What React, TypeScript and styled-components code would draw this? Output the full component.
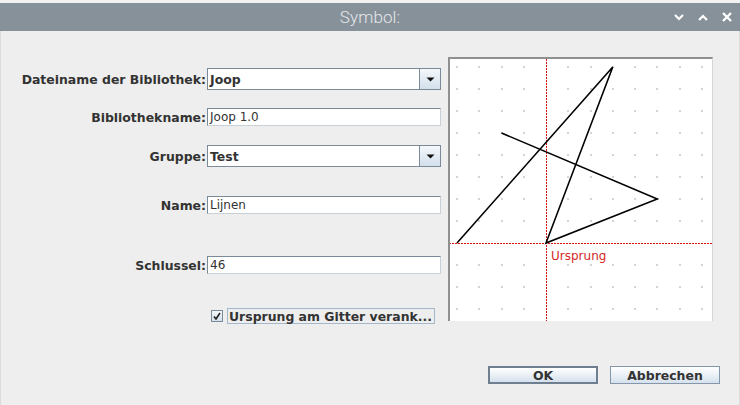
import React from "react";
import styled, { createGlobalStyle } from "styled-components";

const Global = createGlobalStyle`
  html, body { margin: 0; padding: 0; background: #eeeeee; overflow: hidden; }
  #root { width: 740px; height: 405px; }
`;

const Window = styled.div`
  width: 740px;
  height: 405px;
  display: flex;
  flex-direction: column;
  background: #eeeeee;
  box-sizing: border-box;
  font-family: "DejaVu Sans", Verdana, sans-serif;
`;

const TopStrip = styled.div`
  height: 3px;
  background: #f2f2f2;
`;

const TitleBar = styled.div`
  height: 28px;
  background: #87919a;
  display: grid;
  grid-template-columns: 1fr auto 1fr;
  align-items: center;
`;

const Title = styled.div`
  grid-column: 2;
  font-family: Roboto, "Liberation Sans", sans-serif;
  font-weight: 300;
  font-size: 17px;
  color: #e4e7ea;
  letter-spacing: 0.1px;
`;

const WinButtons = styled.div`
  grid-column: 3;
  justify-self: end;
  display: flex;
  align-items: center;
  gap: 14px;
  padding-right: 8px;
`;

const Body = styled.div`
  flex: 1;
  display: flex;
  flex-direction: column;
  border-left: 1px solid #dcdcdc;
  border-right: 1px solid #dcdcdc;
`;

const MainRow = styled.div`
  display: flex;
  align-items: flex-start;
  padding-top: 26px;
`;

const Form = styled.div`
  margin-top: 3px;
  display: grid;
  grid-template-columns: 205px 234px;
  column-gap: 1px;
  grid-template-rows: 38px 38px 40px 58px 62px 40px;
  align-items: center;
`;

const Label = styled.div`
  justify-self: end;
  font-weight: bold;
  font-size: 12.45px;
  color: #333333;
  white-space: nowrap;
`;

const Combo = styled.div`
  height: 22px;
  box-sizing: border-box;
  border: 1px solid #7a8a99;
  background: #ffffff;
  display: flex;
  align-items: stretch;
`;

const ComboText = styled.div`
  flex: 1;
  display: flex;
  align-items: center;
  padding-left: 2px;
  font-weight: bold;
  font-size: 12.45px;
  color: #333333;
`;

const ArrowButton = styled.div`
  width: 20px;
  border-left: 1px solid #7a8a99;
  background: linear-gradient(#f4f8fb, #d3dfeb);
  display: flex;
  align-items: center;
  justify-content: center;
`;

const Field = styled.div`
  height: 18px;
  box-sizing: border-box;
  border: 1px solid #7a8a99;
  border-right-color: #c8d0d8;
  border-bottom-color: #c8d0d8;
  background: #ffffff;
  display: flex;
  align-items: center;
  padding-left: 2px;
  font-size: 12px;
  color: #333333;
`;

const CheckRow = styled.div`
  grid-column: 2;
  display: flex;
  align-items: center;
  gap: 4px;
  padding-left: 4px;
`;

const CheckBox = styled.div`
  width: 12px;
  height: 12px;
  box-sizing: border-box;
  border: 1px solid #7a8a99;
  background: linear-gradient(#f4f8fb, #d3dfeb);
  display: flex;
  align-items: center;
  justify-content: center;
`;

const CheckLabel = styled.div`
  height: 16px;
  box-sizing: border-box;
  border: 1px solid #a3b8cc;
  padding: 0 2px 0 1px;
  display: flex;
  align-items: center;
  font-weight: bold;
  font-size: 12.45px;
  color: #333333;
  white-space: nowrap;
`;

const Canvas = styled.div`
  margin-left: 7px;
  width: 265px;
  height: 264px;
  box-sizing: border-box;
  background: #ffffff;
  border-top: 2px solid #8f8f8f;
  border-left: 2px solid #8f8f8f;
  border-right: 1px solid #d6d6d6;
  display: flex;
`;

const ButtonRow = styled.div`
  display: flex;
  justify-content: flex-end;
  gap: 12px;
  margin-top: 30px;
  padding-right: 19px;
`;

const Button = styled.div<{ $default?: boolean }>`
  width: 110px;
  height: 18px;
  box-sizing: border-box;
  border: ${(p) => (p.$default ? "2px solid #6f7f8f" : "1px solid #8497aa")};
  background: linear-gradient(#ffffff, #d5e1ed);
  display: flex;
  align-items: center;
  justify-content: center;
  font-weight: bold;
  font-size: 12.45px;
  color: #333333;
`;

const Chevron = ({ up }: { up?: boolean }) => (
  <svg width="10" height="7" viewBox="0 0 10 7">
    <path
      d={up ? "M1 6 L5 2 L9 6" : "M1 1 L5 5 L9 1"}
      stroke="#ffffff"
      strokeWidth="2.2"
      fill="none"
    />
  </svg>
);

const CloseIcon = () => (
  <svg width="10" height="10" viewBox="0 0 10 10">
    <path d="M1 1 L9 9 M9 1 L1 9" stroke="#ffffff" strokeWidth="2.4" fill="none" />
  </svg>
);

const DownTriangle = () => (
  <svg width="9" height="5" viewBox="0 0 9 5">
    <path d="M0.5 0.5 L8.5 0.5 L4.5 4.5 Z" fill="#111111" />
  </svg>
);

const CheckMark = () => (
  <svg width="8" height="8" viewBox="0 0 8 8">
    <path d="M1 4.5 L3 7 L7 1" stroke="#222" strokeWidth="1.6" fill="none" />
  </svg>
);

const OX = 546;
const OY = 243;
const SX = 22.25;
const SY = 22;

const pt = (x: number, y: number) => `${OX + x * SX},${OY + y * SY}`;

const Drawing = () => {
  const dots: React.ReactNode[] = [];
  for (let i = -4; i <= 7; i++) {
    for (let j = -8; j <= 3; j++) {
      if (i === 0 || j === 0) continue;
      const x = Math.round(OX + i * SX);
      const y = Math.round(OY + j * SY);
      dots.push(<rect key={`${i}_${j}`} x={x - 0.5} y={y - 0.5} width="1" height="1" fill="#555" />);
    }
  }
  const poly = [pt(-4, 0), pt(3, -8), pt(0, 0), pt(5, -2), pt(-2, -5)].join(" ");
  return (
    <svg width="262" height="262" viewBox="450 59 262 262">
      {dots}
      <line x1={OX + 0.5} y1="59" x2={OX + 0.5} y2="321" stroke="#d41414" strokeWidth="1" strokeDasharray="2 1" />
      <line x1="449" y1={OY + 0.5} x2="712" y2={OY + 0.5} stroke="#d41414" strokeWidth="1" strokeDasharray="2 1" />
      <polyline points={poly} fill="none" stroke="#000" strokeWidth="1.6" strokeLinejoin="miter" />
      <text x="551" y="260" fontFamily="DejaVu Sans, sans-serif" fontSize="12" fill="#d42828">
        Ursprung
      </text>
    </svg>
  );
};

export default function App() {
  return (
    <>
      <Global />
      <Window>
        <TopStrip />
        <TitleBar>
          <Title>Symbol:</Title>
          <WinButtons>
            <Chevron />
            <Chevron up />
            <CloseIcon />
          </WinButtons>
        </TitleBar>
        <Body>
          <MainRow>
            <Form>
              <Label>Dateiname der Bibliothek:</Label>
              <Combo>
                <ComboText>Joop</ComboText>
                <ArrowButton>
                  <DownTriangle />
                </ArrowButton>
              </Combo>
              <Label>Bibliothekname:</Label>
              <Field>Joop 1.0</Field>
              <Label>Gruppe:</Label>
              <Combo>
                <ComboText>Test</ComboText>
                <ArrowButton>
                  <DownTriangle />
                </ArrowButton>
              </Combo>
              <Label>Name:</Label>
              <Field>Lijnen</Field>
              <Label>Schlussel:</Label>
              <Field>46</Field>
              <CheckRow>
                <CheckBox>
                  <CheckMark />
                </CheckBox>
                <CheckLabel>Ursprung am Gitter verank...</CheckLabel>
              </CheckRow>
            </Form>
            <Canvas>
              <Drawing />
            </Canvas>
          </MainRow>
          <ButtonRow>
            <Button $default>OK</Button>
            <Button>Abbrechen</Button>
          </ButtonRow>
        </Body>
      </Window>
    </>
  );
}
